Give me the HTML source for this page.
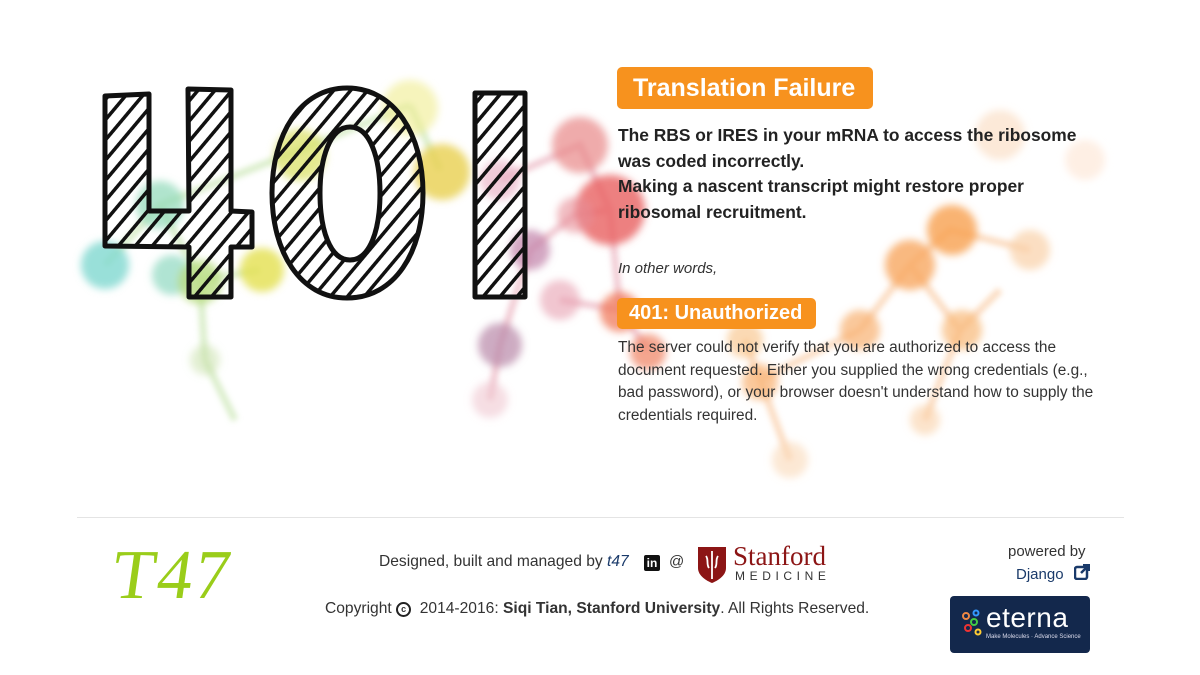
<!DOCTYPE html>
<html><head><meta charset="utf-8"><style>
html,body{margin:0;padding:0;background:#fff;width:1200px;height:675px;overflow:hidden;position:relative;font-family:"Liberation Sans",Arial,sans-serif;color:#222}
svg.bg{position:absolute;left:0;top:0}
.badge{position:absolute;background:#f7921e;color:#fff;font-weight:bold;border-radius:5px}
.t{position:absolute;white-space:nowrap}
</style></head><body>
<svg class="bg" width="1200" height="520" viewBox="0 0 1200 520">
<defs>
<filter id="b" x="-50%" y="-50%" width="200%" height="200%"><feGaussianBlur stdDeviation="4"/></filter>
<filter id="b2" x="-50%" y="-50%" width="200%" height="200%"><feGaussianBlur stdDeviation="3"/></filter>
<pattern id="h" width="13" height="13" patternUnits="userSpaceOnUse" patternTransform="rotate(40)">
<rect width="13" height="13" fill="none"/><rect x="0" y="0" width="3.5" height="13" fill="#111"/></pattern>
</defs>
<g filter="url(#b2)" stroke-width="7" opacity="0.55">
<path d="M105 265L160 205L300 150L410 105M160 205L200 280L260 270M200 280L205 360L235 420M440 170L410 105" stroke="#bde0a0" fill="none"/>
<path d="M500 180L580 145L610 210L575 215L530 250L500 345L490 400M610 210L620 310L648 350M560 300L620 310" stroke="#e6a0b0" fill="none"/>
<path d="M910 265L950 230L1030 250M910 265L960 330L1000 290M860 330L760 380L745 340M860 330L910 265M760 380L790 460M960 330L925 420" stroke="#f8c090" fill="none"/>
</g>
<g filter="url(#b)">
<circle cx="105" cy="265" r="24" fill="#7fd8d0" opacity=".8"/>
<circle cx="160" cy="205" r="24" fill="#8ed8b8" opacity=".7"/>
<circle cx="172" cy="275" r="20" fill="#8ed8c0" opacity=".7"/>
<circle cx="200" cy="282" r="22" fill="#b8dc80" opacity=".8"/>
<circle cx="262" cy="270" r="22" fill="#e4e050" opacity=".8"/>
<circle cx="300" cy="155" r="26" fill="#d8e060" opacity=".7"/>
<circle cx="410" cy="108" r="28" fill="#f0ec90" opacity=".6"/>
<circle cx="442" cy="172" r="28" fill="#e8d050" opacity=".8"/>
<circle cx="205" cy="360" r="15" fill="#c8e0a8" opacity=".5"/>
<circle cx="500" cy="180" r="20" fill="#e8a8c0" opacity=".6"/>
<circle cx="530" cy="250" r="20" fill="#c080a8" opacity=".7"/>
<circle cx="500" cy="345" r="22" fill="#b888a8" opacity=".7"/>
<circle cx="580" cy="145" r="28" fill="#e88888" opacity=".7"/>
<circle cx="610" cy="210" r="35" fill="#e86060" opacity=".8"/>
<circle cx="575" cy="215" r="18" fill="#e89098" opacity=".6"/>
<circle cx="560" cy="300" r="20" fill="#e8a0b0" opacity=".6"/>
<circle cx="620" cy="312" r="20" fill="#f07050" opacity=".7"/>
<circle cx="648" cy="352" r="18" fill="#f08060" opacity=".7"/>
<circle cx="490" cy="400" r="18" fill="#f0c8d0" opacity=".6"/>
<circle cx="910" cy="265" r="25" fill="#f8a860" opacity=".8"/>
<circle cx="952" cy="230" r="25" fill="#f8a050" opacity=".8"/>
<circle cx="1030" cy="250" r="20" fill="#fad0a8" opacity=".7"/>
<circle cx="962" cy="330" r="20" fill="#f8b878" opacity=".7"/>
<circle cx="860" cy="330" r="20" fill="#f8b070" opacity=".7"/>
<circle cx="760" cy="382" r="18" fill="#f8b070" opacity=".7"/>
<circle cx="745" cy="340" r="18" fill="#f8c080" opacity=".6"/>
<circle cx="790" cy="460" r="18" fill="#fad8b8" opacity=".6"/>
<circle cx="925" cy="420" r="15" fill="#fad0a8" opacity=".6"/>
<circle cx="1000" cy="135" r="25" fill="#fbe0c8" opacity=".7"/>
<circle cx="1085" cy="160" r="20" fill="#fde8d8" opacity=".7"/>
</g>
<g stroke="#111" stroke-width="5" stroke-linejoin="round" fill="url(#h)">
<path d="M105 96L149 94L149 211L189 211L188 89L231 90L231 211L252 212L252 247L231 247L231 297L189 297L189 247L105 246Z"/>
<path fill-rule="evenodd" d="M347 88C395 88 423 135 423 193C423 252 395 298 347 298C300 298 272 252 272 193C272 135 300 88 347 88ZM350 127C330 127 320 158 320 193C320 230 330 260 350 260C370 260 380 230 380 193C380 158 370 127 350 127Z"/>
<rect x="475" y="93" width="50" height="204"/>
</g>
</svg>

<div class="badge" style="left:617px;top:67px;width:256px;height:42px;font-size:25px;line-height:42px;text-indent:16px">Translation Failure</div>
<div class="t" style="left:618px;top:123px;font-size:17.4px;font-weight:bold;line-height:25.7px;color:#222">The RBS or IRES in your mRNA to access the ribosome<br>was coded incorrectly.<br>Making a nascent transcript might restore proper<br>ribosomal recruitment.</div>
<div class="t" style="left:618px;top:260px;font-size:15px;font-style:italic;color:#333">In other words,</div>
<div class="badge" style="left:617px;top:298px;width:199px;height:31px;font-size:20px;line-height:31px;text-indent:12px">401: Unauthorized</div>
<div class="t" style="left:618px;top:337px;font-size:15.4px;line-height:22.5px;color:#333">The server could not verify that you are authorized to access the<br>document requested. Either you supplied the wrong credentials (e.g.,<br>bad password), or your browser doesn't understand how to supply the<br>credentials required.</div>

<div style="position:absolute;left:77px;top:517px;width:1047px;height:1px;background:#e4e4e4"></div>
<div class="t" style="left:113px;top:536px;font-family:'Liberation Serif',serif;font-size:70px;color:#9acd1a;letter-spacing:2px;transform:skewX(-8deg);line-height:80px">T47</div>

<div class="t" style="left:379px;top:553px;font-size:15.6px;color:#333">Designed, built and managed by <i style="color:#1a3a6a">t47</i></div>
<div class="t" style="left:644px;top:555px;width:16px;height:16px;background:#111;color:#fff;font-size:12px;font-weight:bold;line-height:17px;text-align:center;border-radius:2px">in</div>
<div class="t" style="left:669px;top:553px;font-size:15px;color:#333">@</div>
<svg class="t" style="left:697px;top:546px" width="30" height="38" viewBox="0 0 30 38"><path d="M1 1H29V22C29 30 20 35 15 37C10 35 1 30 1 22Z" fill="#8c1515"/><path d="M15 5V33M9 10C12 14 9 18 12 22M21 10C18 14 21 18 18 22" stroke="#fff" stroke-width="1.8" fill="none"/></svg>
<div class="t" style="left:733px;top:541px;font-family:'Liberation Serif',serif;font-size:27px;color:#8c1515;line-height:30px">Stanford</div>
<div class="t" style="left:735px;top:569px;font-size:12px;color:#333;letter-spacing:4.6px">MEDICINE</div>

<div class="t" style="left:325px;top:600px;font-size:15.6px;color:#333">Copyright <span style="display:inline-block;width:11px;height:11px;border:2px solid #222;border-radius:50%;font-size:9px;line-height:11px;text-align:center;font-weight:bold;vertical-align:1px">c</span>&nbsp; 2014-2016: <b>Siqi Tian, Stanford University</b>. All Rights Reserved.</div>

<div class="t" style="left:1008px;top:543px;font-size:15px;color:#333">powered by</div>
<div class="t" style="left:1016px;top:566px;font-size:15px;color:#1a3a6a">Django</div>
<svg class="t" style="left:1074px;top:564px" width="16" height="16" viewBox="0 0 16 16"><rect x="1" y="3" width="12" height="12" rx="2" fill="none" stroke="#1a3a6a" stroke-width="2.5"/><path d="M7 9L15 1M9 1H15V7" stroke="#1a3a6a" stroke-width="2.5" fill="none"/></svg>
<div class="t" style="left:950px;top:596px;width:140px;height:57px;background:#13284c;border-radius:4px">
<svg style="position:absolute;left:10px;top:12px" width="24" height="30" viewBox="0 0 24 30"><circle cx="6" cy="8" r="3" fill="none" stroke="#e84" stroke-width="2"/><circle cx="14" cy="14" r="3" fill="none" stroke="#4c4" stroke-width="2"/><circle cx="8" cy="20" r="3" fill="none" stroke="#e33" stroke-width="2"/><circle cx="16" cy="5" r="2.5" fill="none" stroke="#39f" stroke-width="2"/><circle cx="18" cy="24" r="2.5" fill="none" stroke="#fc3" stroke-width="2"/></svg>
<div style="position:absolute;left:36px;top:6px;color:#fff;font-size:28px;letter-spacing:0.5px">eterna</div>
<div style="position:absolute;left:36px;top:38px;color:#dde;font-size:6px;white-space:nowrap">Make Molecules · Advance Science</div>
</div>
</body></html>
